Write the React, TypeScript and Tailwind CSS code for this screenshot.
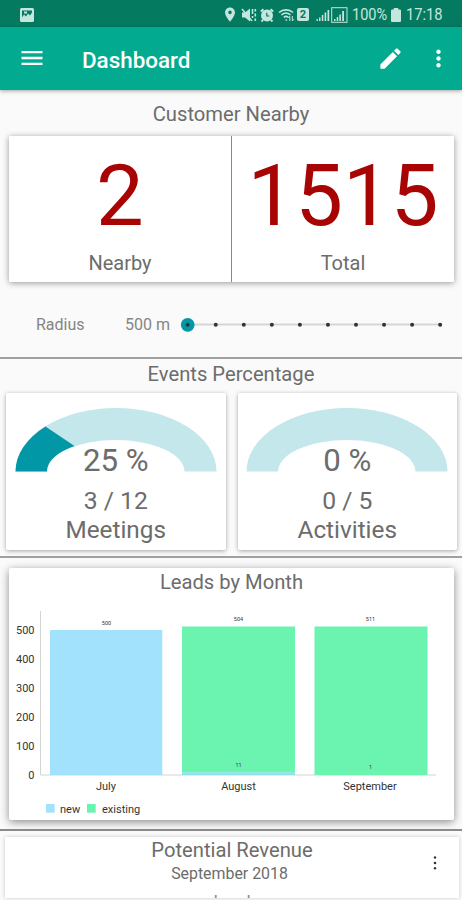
// Dashboard screen: nearby customers, event gauges, leads chart
import type { ReactNode } from 'react';
import { MdEdit, MdLocationOn, MdMenu, MdMoreVert } from 'react-icons/md';

interface GaugeItem {
  label: string;
  percent: string;
  ratio: string;
  filled: boolean;
}

const gauges: GaugeItem[] = [
  { label: 'Meetings', percent: '25 %', ratio: '3 / 12', filled: true },
  { label: 'Activities', percent: '0 %', ratio: '0 / 5', filled: false },
];

const ticks = [0, 1, 2, 3, 4, 5, 6, 7, 8, 9];
const yLabels = [0, 100, 200, 300, 400, 500];

// status bar drawings
function StatusIcons() {
  return (
    <div className="flex h-full items-center text-[#c4e6dc]">
      <MdLocationOn className="h-[17px] w-[18px]" />
      <svg className="ml-[2px] h-[14px] w-[16px]" viewBox="0 0 16 14" fill="none" stroke="currentColor">
        <path d="M1 4.500h3l5-4v13l-5-4H1z" fill="currentColor" stroke="none" />
        <path d="M1 1l10 12" strokeWidth="1.500" />
        <path d="M11.500 1v5M14.300 1v2.500M14.300 5.500v3M14.300 10.500v2.500M11.500 8v2" strokeWidth="1.600" />
      </svg>
      <svg className="ml-[3px] h-[14px] w-[14px]" viewBox="0 0 14 14">
        <circle cx="7" cy="7.500" r="6" fill="currentColor" />
        <path d="M.8 3.500L3.500 1.200M13.200 3.500L10.500 1.200M3 12l-1.500 1.500M11 12l1.500 1.500" stroke="currentColor" strokeWidth="2" />
        <path d="M6.800 4.800v3.200h2.500" stroke="#047b61" strokeWidth="1.200" fill="none" />
      </svg>
      <svg className="ml-[4px] h-[14px] w-[17px]" viewBox="0 0 17 14" fill="none" stroke="currentColor">
        <path d="M1 4.500c4-3.500 10-3.500 14 0M3.300 7c3-2.500 6.500-2.500 9.200 0M5.800 9.300c1.500-1.200 3-1.200 4.500 0" strokeWidth="1.600" />
        <path d="M7.500 11.500l1.500 1" strokeWidth="1.500" />
        <path d="M11.800 13V8.500M10.300 10l1.500-1.700M14.300 8v4.800M14.300 13l1.500-1.700" strokeWidth="1" />
      </svg>
      <div className="ml-[2px] h-[13px] w-[12px] rounded-[2px] bg-[#c4e6dc] text-center text-[11px] leading-[13px] font-bold text-[#047b61]">
        2
      </div>
      <svg className="ml-[7px] h-[16px] w-[32px]" viewBox="0 0 32 16" fill="currentColor">
        <path d="M.5 14h1.300v-2H.5zM3 14h1.500v-3.500H3zM5.800 14h1.500V8H5.800zM8.600 14h1.600V5.500H8.600zM11.500 14h1.700V3h-1.700z" />
        <rect x="15.700" y=".700" width="15.300" height="14.600" fill="none" stroke="currentColor" strokeWidth="1" />
        <path d="M18 14v-2h1.500v2zM20.700 14v-4h1.500v4zM23.300 14V7.500h1.600V14zM26.200 14V4h1.800v10z" />
      </svg>
      <span className="ml-[4px] w-[35px] origin-left pt-[2px] text-[16.500px] leading-none whitespace-nowrap scale-x-[.88]">100%</span>
      <svg className="ml-[4px] h-[14px] w-[10px]" viewBox="0 0 9 14" preserveAspectRatio="none" fill="currentColor">
        <path d="M2.500 0h4v1.500H8q1 0 1 1V13q0 1-1 1H1q-1 0-1-1V2.500q0-1 1-1h1.500z" />
      </svg>
      <span className="ml-[5px] w-[37px] origin-left pt-[2px] text-[16.500px] leading-none whitespace-nowrap scale-x-[.89]">17:18</span>
    </div>
  );
}

function SectionTitle({ children }: { children: ReactNode }) {
  return <h2 className="text-center text-[20.2px] leading-6">{children}</h2>;
}

function Gauge({ item }: { item: GaugeItem }) {
  return (
    <div className="h-[157px] flex-1 rounded-[2px] bg-white pt-[15px] text-center shadow-[0_1px_4px_rgba(0,0,0,.35)]">
      <svg className="mx-auto h-[64px] w-[202px]" viewBox="0 0 202 64">
        <path d="M.5 63.500A100.500 63.500 0 0 1 201.500 63.500H169.500A68.750 31.500 0 0 0 32 63.500Z" fill="#c3e7ea" />
        {item.filled && <path d="M.5 63.500A100.500 63.500 0 0 1 30.500 18.500L59.500 38A68.750 31.500 0 0 0 32 63.500Z" fill="#0297a7" />}
      </svg>
      <div className="-mt-[30px] text-[31.200px] leading-[38px]">{item.percent}</div>
      <div className="mt-[6px] text-[24.700px] leading-[29px]">{item.ratio}</div>
      <div className="text-[24.300px] leading-[29px]">{item.label}</div>
    </div>
  );
}

function LeadsChart() {
  return (
    <svg className="block h-[220px] w-[445px]" viewBox="9 600 445 220" fontSize="11" fill="#333">
      <path d="M40.500 611V775H436" fill="none" stroke="#d4d4d4" />
      {yLabels.map((v) => (
        <text key={v} x="34.500" y={778.5 - v * 0.289} textAnchor="end">{v}</text>
      ))}
      <rect x="50" y="630" width="112.300" height="145" fill="#a3e2fc" />
      <rect x="182" y="626.500" width="113" height="146" fill="#6bf4b0" />
      <rect x="182" y="772.300" width="113" height="2.700" fill="#8fe3ea" />
      <rect x="314.500" y="626.500" width="113" height="148.500" fill="#6bf4b0" />
      <g textAnchor="middle">
        <g fontSize="5.500">
          <text x="106.500" y="624.500">500</text>
          <text x="238.500" y="621.300">504</text>
          <text x="370.500" y="621.300">511</text>
          <text x="238.500" y="766.500">11</text>
          <text x="370.500" y="769">1</text>
        </g>
        <text x="106" y="790">July</text>
        <text x="238.500" y="790">August</text>
        <text x="370" y="790">September</text>
      </g>
      <rect x="46" y="804" width="8.700" height="8.700" fill="#a3e2fc" />
      <text x="60" y="813">new</text>
      <rect x="87" y="804" width="8.700" height="8.700" fill="#6bf4b0" />
      <text x="102" y="813">existing</text>
    </svg>
  );
}

export default function App() {
  return (
    <div className="h-[900px] w-[462px] overflow-hidden bg-[#fafafa] font-[Roboto,'Liberation_Sans',sans-serif] text-[#6c6c6c]">
      {/* status bar */}
      <div className="flex h-[27px] items-center justify-between bg-[#047b61] pt-[2px] pr-[19px] pl-[20px]">
        <svg className="h-[14px] w-[14px]" viewBox="0 0 14 14">
          <rect width="14" height="14" rx="1.500" fill="#c4e6dc" />
          <path d="M2 2.500h10v2l-2 3-2-2-2 3-2-2-2 3z" fill="#047b61" />
          <path d="M4 3.500h3v2H4z" fill="#c4e6dc" />
        </svg>
        <StatusIcons />
      </div>

      {/* app bar */}
      <header className="relative flex h-[63px] items-center bg-[#02ab8f] pr-[10px] pl-[18px] text-white shadow-[0_1px_4px_rgba(0,0,0,.35)]">
        <MdMenu className="-mt-[1px] size-[28px]" />
        <h1 className="ml-[36px] flex-1 pt-[2px] text-[22.400px] leading-7 font-medium">Dashboard</h1>
        <MdEdit className="size-[27px]" />
        <MdMoreVert className="ml-[21px] size-[27px]" />
      </header>

      {/* customer nearby */}
      <section className="h-[267px] pt-[12px]">
        <SectionTitle>Customer Nearby</SectionTitle>
        <div className="mt-[10px] mr-[8px] ml-[9px] flex h-[146px] rounded-[1px] bg-white text-center shadow-[0_1px_6px_rgba(0,0,0,.4)]">
          <div className="w-[223px] border-r border-[#888] pt-[15px]">
            <div className="text-[85px] leading-[90px] text-[#a80404]">2</div>
            <div className="mt-[10px] text-[20px] leading-6">Nearby</div>
          </div>
          <div className="flex-1 pt-[15px]">
            <div className="text-[85px] leading-[90px] text-[#a80404]">1515</div>
            <div className="mt-[10px] text-[20px] leading-6">Total</div>
          </div>
        </div>
        <div className="mt-[27px] flex h-[32px] items-center text-[16px] text-[#858585]">
          <span className="ml-[36px] w-[89px]">Radius</span>
          <span className="w-[55px]">500 m</span>
          <svg className="h-[16px] w-[265px]" viewBox="180 316 265 16">
            <path d="M188 323.500H440" stroke="#d6d6d6" strokeWidth="2" />
            <circle cx="187.700" cy="323.800" r="6.900" fill="#0297a7" />
            {ticks.map((t) => (
              <circle key={t} cx={187.7 + t * 28.05} cy="323.700" r="2" fill="#333" />
            ))}
          </svg>
        </div>
      </section>
      <hr className="border-t-2 border-[#a0a0a0]" />

      {/* events percentage */}
      <section className="h-[197px] pt-[3px]">
        <SectionTitle>Events Percentage</SectionTitle>
        <div className="mt-[7px] mr-[5px] ml-[6px] flex gap-[12px]">
          {gauges.map((g) => (
            <Gauge key={g.label} item={g} />
          ))}
        </div>
      </section>
      <hr className="border-t-2 border-[#a0a0a0]" />

      {/* leads by month */}
      <section className="h-[271px] pt-[10px]">
        <div className="mr-[8px] ml-[9px] h-[252px] rounded-[2px] bg-white pt-[2px] shadow-[0_2px_8px_rgba(0,0,0,.45)]">
          <SectionTitle>Leads by Month</SectionTitle>
          <div className="mt-[6px]">
            <LeadsChart />
          </div>
        </div>
      </section>
      <hr className="relative border-t-2 border-[#8a8a8a]" />

      {/* potential revenue, continues below the fold */}
      <section className="relative bg-[#fafafa] pt-[6px]">
        <div className="relative mr-[3px] ml-[5px] h-[61px] overflow-hidden bg-white pt-px text-center shadow-[0_0_4px_rgba(0,0,0,.2)]">
          <SectionTitle>Potential Revenue</SectionTitle>
          <div className="pr-[5px] text-[15.900px] leading-6">September 2018</div>
          <div className="mt-[3px] text-[17px] leading-6 text-[#8a8a8a]">Lead</div>
          <svg className="absolute top-[18px] left-[428px] h-[16px] w-[4px]" viewBox="0 0 4 16" fill="#333">
            <circle cx="2" cy="2.500" r="1.200" />
            <circle cx="2" cy="8" r="1.300" />
            <circle cx="2" cy="13.300" r="1.200" />
          </svg>
        </div>
      </section>
    </div>
  );
}
